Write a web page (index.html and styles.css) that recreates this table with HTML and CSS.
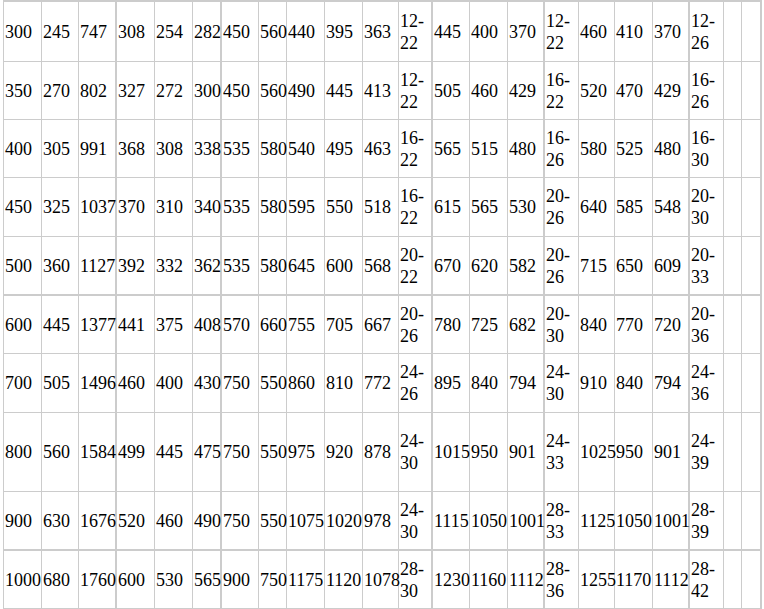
FILE: index.html
```html
<!DOCTYPE html>
<html lang="zh">
<head>
<meta charset="utf-8">
<title>尺寸表</title>
<link rel="stylesheet" href="styles.css">
</head>
<body>
<table class="sheet">
<tbody>
<tr><td>300</td><td>245</td><td>747</td><td>308</td><td>254</td><td>282</td><td>450</td><td>560</td><td>440</td><td>395</td><td>363</td><td>12-<wbr>22</td><td>445</td><td>400</td><td>370</td><td>12-<wbr>22</td><td>460</td><td>410</td><td>370</td><td>12-<wbr>26</td><td></td><td></td></tr>
<tr><td>350</td><td>270</td><td>802</td><td>327</td><td>272</td><td>300</td><td>450</td><td>560</td><td>490</td><td>445</td><td>413</td><td>12-<wbr>22</td><td>505</td><td>460</td><td>429</td><td>16-<wbr>22</td><td>520</td><td>470</td><td>429</td><td>16-<wbr>26</td><td></td><td></td></tr>
<tr><td>400</td><td>305</td><td>991</td><td>368</td><td>308</td><td>338</td><td>535</td><td>580</td><td>540</td><td>495</td><td>463</td><td>16-<wbr>22</td><td>565</td><td>515</td><td>480</td><td>16-<wbr>26</td><td>580</td><td>525</td><td>480</td><td>16-<wbr>30</td><td></td><td></td></tr>
<tr><td>450</td><td>325</td><td>1037</td><td>370</td><td>310</td><td>340</td><td>535</td><td>580</td><td>595</td><td>550</td><td>518</td><td>16-<wbr>22</td><td>615</td><td>565</td><td>530</td><td>20-<wbr>26</td><td>640</td><td>585</td><td>548</td><td>20-<wbr>30</td><td></td><td></td></tr>
<tr><td>500</td><td>360</td><td>1127</td><td>392</td><td>332</td><td>362</td><td>535</td><td>580</td><td>645</td><td>600</td><td>568</td><td>20-<wbr>22</td><td>670</td><td>620</td><td>582</td><td>20-<wbr>26</td><td>715</td><td>650</td><td>609</td><td>20-<wbr>33</td><td></td><td></td></tr>
<tr><td>600</td><td>445</td><td>1377</td><td>441</td><td>375</td><td>408</td><td>570</td><td>660</td><td>755</td><td>705</td><td>667</td><td>20-<wbr>26</td><td>780</td><td>725</td><td>682</td><td>20-<wbr>30</td><td>840</td><td>770</td><td>720</td><td>20-<wbr>36</td><td></td><td></td></tr>
<tr><td>700</td><td>505</td><td>1496</td><td>460</td><td>400</td><td>430</td><td>750</td><td>550</td><td>860</td><td>810</td><td>772</td><td>24-<wbr>26</td><td>895</td><td>840</td><td>794</td><td>24-<wbr>30</td><td>910</td><td>840</td><td>794</td><td>24-<wbr>36</td><td></td><td></td></tr>
<tr><td>800</td><td>560</td><td>1584</td><td>499</td><td>445</td><td>475</td><td>750</td><td>550</td><td>975</td><td>920</td><td>878</td><td>24-<wbr>30</td><td>1015</td><td>950</td><td>901</td><td>24-<wbr>33</td><td>1025</td><td>950</td><td>901</td><td>24-<wbr>39</td><td></td><td></td></tr>
<tr><td>900</td><td>630</td><td>1676</td><td>520</td><td>460</td><td>490</td><td>750</td><td>550</td><td>1075</td><td>1020</td><td>978</td><td>24-<wbr>30</td><td>1115</td><td>1050</td><td>1001</td><td>28-<wbr>33</td><td>1125</td><td>1050</td><td>1001</td><td>28-<wbr>39</td><td></td><td></td></tr>
<tr><td>1000</td><td>680</td><td>1760</td><td>600</td><td>530</td><td>565</td><td>900</td><td>750</td><td>1175</td><td>1120</td><td>1078</td><td>28-<wbr>30</td><td>1230</td><td>1160</td><td>1112</td><td>28-<wbr>36</td><td>1255</td><td>1170</td><td>1112</td><td>28-<wbr>42</td><td></td><td></td></tr>
</tbody>
</table>
</body>
</html>
```
FILE: styles.css
```css
html, body {
  margin: 0;
  padding: 0;
  background: #ffffff;
}

.sheet {
  display: grid;
  grid-template-columns: 38px 37px 38px 38px 38px 29px 37px 28px 38px 38px 36px 34px 37px 38px 37px 34px 36px 38px 37px 34px 18px 20px;
  grid-template-rows: 60px 58px 58px 59px 59px 58px 59px 79px 59px 58px;
  width: max-content;
  margin-left: 3px;
  border-left: 1px solid #cccccc;
  border-top: 2px solid #cccccc;
  font-family: "Liberation Serif", "Noto Sans CJK SC", serif;
  font-size: 18px;
  line-height: 22px;
  color: #000000;
}

.sheet tbody,
.sheet tr {
  display: contents;
}

.sheet td {
  box-sizing: border-box;
  display: flex;
  align-items: center;
  padding: 0 1px;
  border-right: 1px solid #cccccc;
  border-bottom: 1px solid #cccccc;
  white-space: normal;
  overflow: visible;
  min-width: 0;
}

.sheet td:nth-child(3),
.sheet td:nth-child(6),
.sheet td:nth-child(12),
.sheet td:nth-child(15),
.sheet td:nth-child(19),
.sheet td:nth-child(22) {
  border-right-width: 2px;
}

.sheet tr:nth-child(5) td,
.sheet tr:nth-child(9) td {
  border-bottom-width: 2px;
}
```
